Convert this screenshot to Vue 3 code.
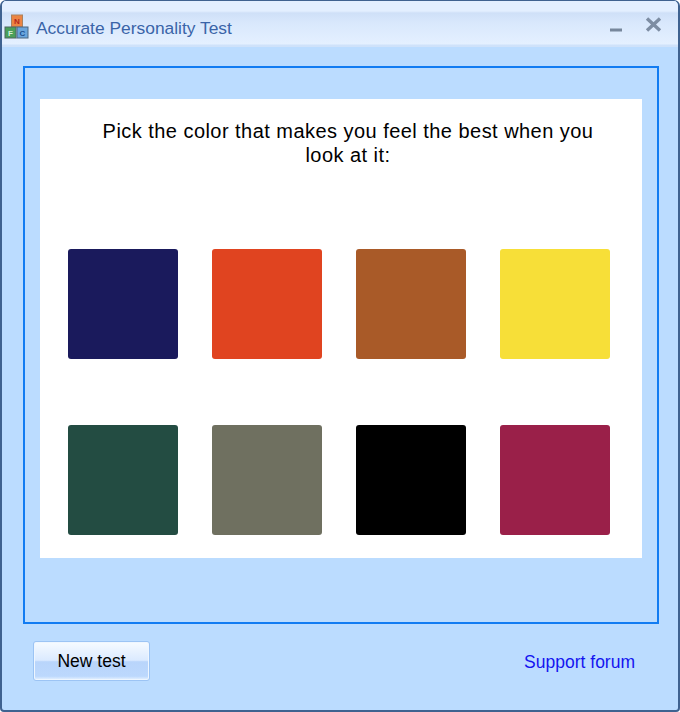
<script setup>
const colors = [
  '#1a1a5c', '#e04420', '#a95a28', '#f7df38',
  '#234c42', '#6f7060', '#000000', '#9a2049',
]
</script>

<template>
  <div class="window">
    <div class="titlebar">
      <svg class="app-icon" width="26" height="26" viewBox="0 0 26 26">
        <rect x="7.500" y="1" width="11" height="12" fill="#ec8443" stroke="#a9825f" />
        <rect x="1" y="13" width="11" height="11" fill="#4aa05a" stroke="#4c6660" />
        <rect x="13" y="13" width="11" height="11" fill="#6aa5dc" stroke="#4c6680" />
        <text x="13" y="10" class="block-letter" fill="#b3261e">N</text>
        <text x="6.500" y="22" class="block-letter" fill="#d8f0d8">F</text>
        <text x="18.500" y="22" class="block-letter" fill="#1c4f8f">C</text>
      </svg>
      <span class="title">Accurate Personality Test</span>
      <svg class="win-btn minimize" width="13" height="5" viewBox="0 0 13 5">
        <rect x="0" y="0.500" width="12" height="3" fill="#77879c" />
      </svg>
      <svg class="win-btn" width="17" height="15" viewBox="0 0 17 15">
        <path d="M2 1.500 15 13.500M15 1.500 2 13.500" stroke="#7d8da3" stroke-width="3.400" fill="none" />
      </svg>
    </div>

    <div class="body">
      <div class="frame">
        <div class="card">
          <p class="question">Pick the color that makes you feel the best when you look at it:</p>
          <div class="swatches">
            <div v-for="c in colors" :key="c" class="swatch" :style="{ background: c }"></div>
          </div>
        </div>
      </div>
      <div class="footer">
        <button class="new-test">New test</button>
        <a class="forum" href="#">Support forum</a>
      </div>
    </div>
  </div>
</template>

<style>
html, body { margin: 0; background: #fff; }
</style>

<style scoped>
.window {
  box-sizing: border-box;
  width: 680px;
  height: 712px;
  display: flex;
  flex-direction: column;
  background: #bbdcff;
  border: 2px solid #3f6290;
  border-top-width: 1px;
  border-radius: 6px 6px 4px 4px;
  overflow: hidden;
  font-family: "Liberation Sans", Arial, sans-serif;
}
.titlebar {
  height: 46px;
  box-sizing: border-box;
  display: flex;
  align-items: center;
  padding: 6px 16px 0 2px;
  background: linear-gradient(#e3efff 0, #e3efff 10px, #cfe0f8 12px, #d9e8fc 22px, #e4f0ff 43px, #cfe2fa 44px);
  flex: none;
}
.app-icon { flex: none; }
.block-letter {
  font-size: 8px;
  font-weight: bold;
  text-anchor: middle;
}
.title {
  margin: 3px 0 0 6px;
  font-size: 17.400px;
  color: #3a64a8;
  flex: 1;
}
.win-btn { flex: none; margin-top: -6px; }
.minimize { margin: 6px 22px 0 0; }
.body {
  flex: 1;
  display: flex;
  flex-direction: column;
  padding: 19px 19px 0 21px;
}
.frame {
  box-sizing: border-box;
  height: 558px;
  border: 2px solid #127cf2;
  padding: 31px 15px 0;
  flex: none;
}
.card {
  box-sizing: border-box;
  height: 459px;
  background: #fff;
  padding: 20px 28px 0;
}
.question {
  margin: 0 0 0 30px;
  width: 500px;
  font-size: 20px;
  line-height: 24px;
  letter-spacing: 0.460px;
  text-align: center;
  color: #000;
}
.swatches {
  display: grid;
  grid-template-columns: repeat(4, 110px);
  grid-auto-rows: 110px;
  column-gap: 34px;
  row-gap: 66px;
  margin-top: 82px;
}
.swatch { border-radius: 3px; }
.footer {
  display: flex;
  justify-content: space-between;
  align-items: center;
  padding: 17px 24px 0 10px;
}
.new-test {
  box-sizing: border-box;
  width: 117px;
  height: 40px;
  padding: 0;
  border: 1px solid #9cc4f4;
  border-radius: 3px;
  background: linear-gradient(#f6fbff 0, #dbeaff 48%, #b9d5fb 52%, #bcd8fd 90%, #eaf4ff 100%);
  box-shadow: inset 0 0 0 1px #eef6ff;
  font-family: "Liberation Sans", Arial, sans-serif;
  font-size: 17.500px;
  color: #000;
}
.forum {
  margin-top: 2px;
  font-size: 17.500px;
  color: #1414f0;
  text-decoration: none;
}
</style>
